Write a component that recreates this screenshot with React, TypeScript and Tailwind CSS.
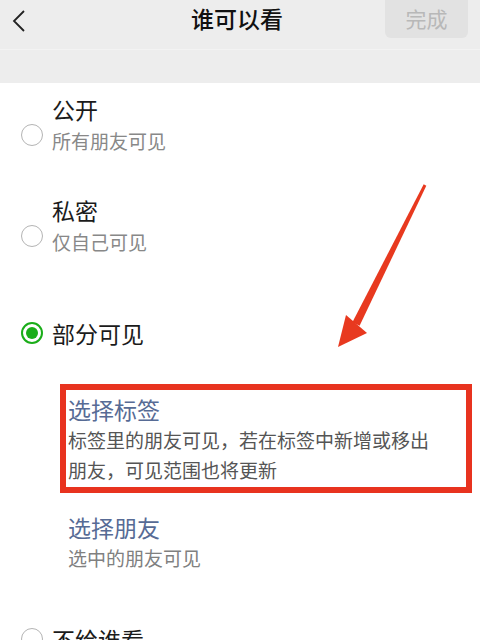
import React from 'react';

const font = { fontFamily: '"Noto Sans CJK SC", "Noto Sans", sans-serif' };

const Radio: React.FC<{ checked?: boolean }> = ({ checked }) =>
  checked ? (
    <div className="w-[22px] h-[22px] rounded-full border-2 border-[#1aad19] flex items-center justify-center">
      <div className="w-[12px] h-[12px] rounded-full bg-[#1aad19]" />
    </div>
  ) : (
    <div className="w-[22px] h-[22px] rounded-full border-[1.5px] border-[#b4b4b4]" />
  );

const Option: React.FC<{ title: string; sub?: string; checked?: boolean; className?: string }> = ({
  title,
  sub,
  checked,
  className,
}) => (
  <div className={`flex ${sub ? 'items-start' : 'items-center'} pl-[21px] gap-[9px] ${className ?? ''}`}>
    <div className={sub ? 'mt-[31px]' : ''}>
      <Radio checked={checked} />
    </div>
    <div className="flex flex-col">
      <div className="text-[23px] leading-[32px] text-[#1b1b1b]">{title}</div>
      {sub && <div className="text-[19px] leading-[32px] text-[#888888]">{sub}</div>}
    </div>
  </div>
);

export default function App() {
  return (
    <div className="relative w-[480px] h-[640px] overflow-hidden bg-white" style={font}>
      {/* top bar */}
      <div className="grid grid-cols-[1fr_auto_1fr] items-start h-[50px] bg-[#ededed] border-b border-[#f3f3f3]">
        <div className="pt-[10px] pl-[12px]">
          <svg width="14" height="22" viewBox="0 0 14 22">
            <polyline points="12,1 2,11 12,21" fill="none" stroke="#222" strokeWidth="1.8" />
          </svg>
        </div>
        <div className="pt-[2px] text-[23px] leading-[32px] font-medium text-[#111] pr-[6px]">谁可以看</div>
        <div className="flex justify-end pr-[12px]">
          <div className="w-[83px] h-[38px] rounded-b-[6px] bg-[#e2e2e2] flex items-center justify-center text-[21px] text-[#b8b8b8]">
            完成
          </div>
        </div>
      </div>
      <div className="h-[33px] bg-[#ededed]" />

      <div className="flex flex-col pt-[10px]">
        <Option title="公开" sub="所有朋友可见" />
        <Option title="私密" sub="仅自己可见" className="mt-[37px]" />
        <Option title="部分可见" checked className="mt-[59px]" />

        <div className="mt-[35px] ml-[60px] w-[412px] border-[6px] border-[#e8331f] pl-[2px] pt-[3px] pb-[2px]">
          <div className="text-[23px] leading-[32px] text-[#576b95]">选择标签</div>
          <div className="text-[19px] leading-[30px] text-[#555555]">
            标签里的朋友可见，若在标签中新增或移出
            <br />
            朋友，可见范围也将更新
          </div>
        </div>

        <div className="mt-[18px] pl-[68px]">
          <div className="text-[23px] leading-[32px] text-[#576b95]">选择朋友</div>
          <div className="text-[19px] leading-[30px] text-[#808080]">选中的朋友可见</div>
        </div>

        <Option title="不给谁看" className="mt-[50px]" />
      </div>

      {/* annotation arrow */}
      <svg className="absolute left-0 top-0 pointer-events-none" width="480" height="640" viewBox="0 0 480 640">
        <polygon points="426.3,185.7 423.7,184.3 352.4,322.2 359.6,325.8" fill="#e8391f" />
        <polygon points="338,347 346,315 367,333" fill="#e8391f" />
      </svg>
    </div>
  );
}
